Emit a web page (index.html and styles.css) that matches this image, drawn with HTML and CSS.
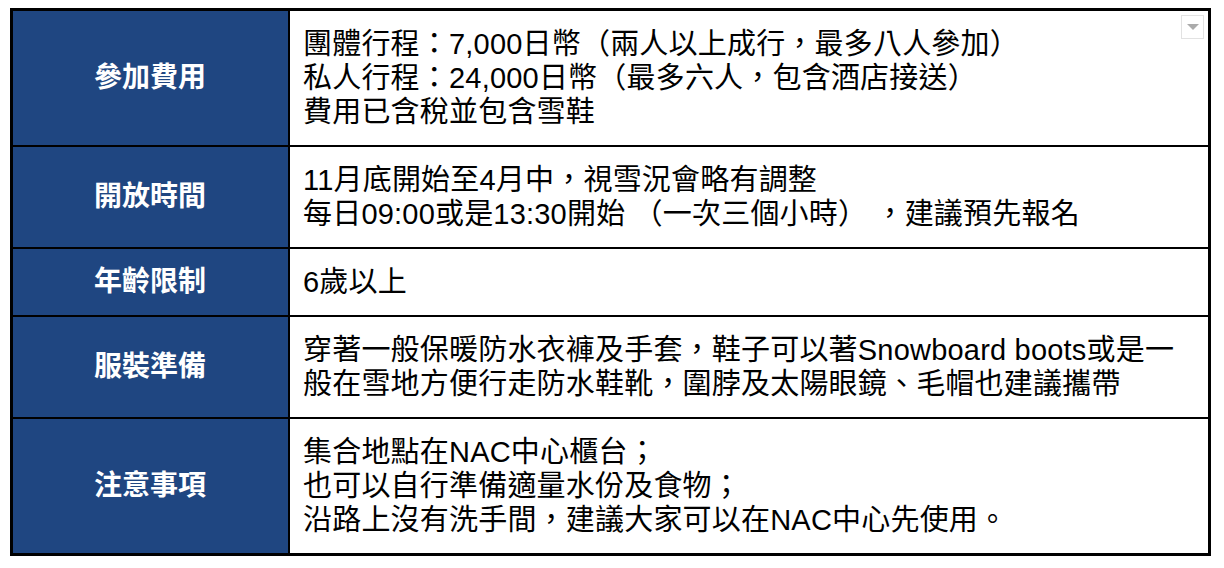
FILE: index.html
```html
<!DOCTYPE html>
<html lang="zh-Hant">
<head>
<meta charset="utf-8">
<title>行程資訊</title>
<link rel="stylesheet" href="styles.css">
</head>
<body>
<div class="wrap">
  <table class="info">
    <tbody>
      <tr>
        <th>參加費用</th>
        <td>團體行程：7,000日幣（兩人以上成行，最多八人參加）<br>私人行程：24,000日幣（最多六人，包含酒店接送）<br>費用已含稅並包含雪鞋</td>
      </tr>
      <tr>
        <th>開放時間</th>
        <td>11月底開始至4月中，視雪況會略有調整<br>每日09:00或是13:30開始 （一次三個小時） ，建議預先報名</td>
      </tr>
      <tr>
        <th>年齡限制</th>
        <td>6歲以上</td>
      </tr>
      <tr>
        <th>服裝準備</th>
        <td>穿著一般保暖防水衣褲及手套，鞋子可以著Snowboard boots或是一<br>般在雪地方便行走防水鞋靴，圍脖及太陽眼鏡、毛帽也建議攜帶</td>
      </tr>
      <tr>
        <th>注意事項</th>
        <td>集合地點在NAC中心櫃台；<br>也可以自行準備適量水份及食物；<br>沿路上沒有洗手間，建議大家可以在NAC中心先使用。</td>
      </tr>
    </tbody>
  </table>
  <div class="dropdown" aria-hidden="true">
    <svg width="12" height="7" viewBox="0 0 12 7"><polygon points="0,0 12,0 6,6" fill="#ababab"/></svg>
  </div>
</div>
</body>
</html>
```
FILE: styles.css
```css
html, body {
  margin: 0;
  padding: 0;
  background: #ffffff;
}

body {
  font-family: "Liberation Sans", "Noto Sans CJK TC", sans-serif;
  color: #000000;
}

.wrap {
  position: relative;
  padding: 8px 0 0 10px;
  width: 1201px;
}

.info {
  width: 1201px;
  border-collapse: collapse;
  border: 3px solid #000000;
}

.info th,
.info td {
  border: 2px solid #000000;
  padding: 16px 14px 16px 13px;
  line-height: 34px;
  font-size: 29px;
  vertical-align: middle;
}

.info th {
  width: 248px;
  background: #1f4681;
  color: #ffffff;
  font-weight: bold;
  text-align: center;
  font-size: 28px;
}

.info td {
  text-align: left;
  white-space: nowrap;
  letter-spacing: 0.2px;
}

.dropdown {
  position: absolute;
  top: 15px;
  left: 1181px;
  width: 21px;
  height: 22px;
  border: 1px solid #e2e2e2;
  display: flex;
  align-items: center;
  justify-content: center;
  background: #ffffff;
}
```
